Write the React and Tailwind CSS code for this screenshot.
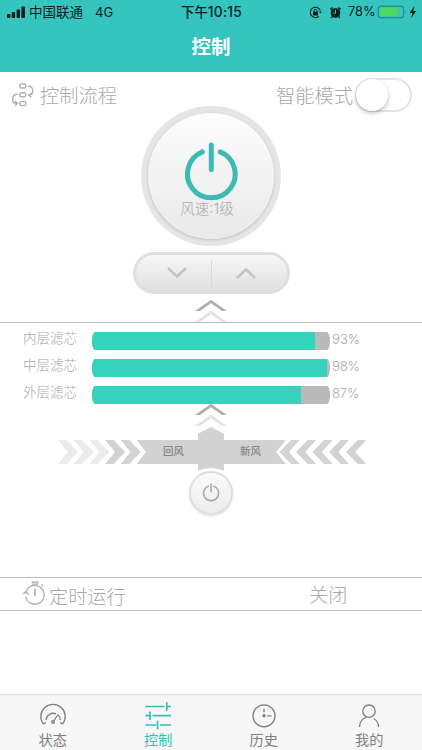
import React from "react";

const filters = [
  { name: "内层滤芯", value: 93, fill: 223 },
  { name: "中层滤芯", value: 98, fill: 235 },
  { name: "外层滤芯", value: 87, fill: 208.5 },
];

function StatusBar() {
  return (
    <div className="flex h-6 items-center pl-[7px] text-[13px] leading-6 text-[#0b1f1f]">
      <svg className="shrink-0" width="19" height="12" viewBox="0 0 19 12" fill="#0b1f1f">
        <rect x="0" y="8" width="3.4" height="4" rx="1" />
        <rect x="4.7" y="6" width="3.4" height="6" rx="1" />
        <rect x="9.6" y="3.4" width="3.4" height="8.6" rx="1" />
        <rect x="14.4" y="0.5" width="3.6" height="11.5" rx="1" />
      </svg>
      <span className="ml-[3px] w-[66px] shrink-0 text-[13.5px]">中国联通</span>
      <span className="w-[86px] shrink-0">4G</span>
      <span className="w-[128px] shrink-0 whitespace-nowrap font-medium">
        <span className="text-[13.4px]">下午</span>
        <span className="text-[13.8px] tracking-[0.25px]">10:15</span>
      </span>
      <svg className="shrink-0" width="13" height="13" viewBox="0 0 13 13" fill="none" stroke="#0b1f1f">
        <path d="M11.3 4.2A5.2 5.2 0 1 0 10 10.3" strokeWidth="1.1" />
        <path d="M9.8 5.5h3L11.3 7.5z" fill="#0b1f1f" stroke="none" />
        <rect x="4" y="5.8" width="5" height="3.7" rx=".4" fill="#0b1f1f" stroke="none" />
        <path d="M5 6V4.8a1.5 1.5 0 0 1 3 0V6" />
      </svg>
      <svg className="ml-[7px] shrink-0" width="13" height="13" viewBox="0 0 13 13" fill="none">
        <circle cx="6.5" cy="7" r="4.8" fill="#0b1f1f" />
        <path d="M1.4 3.4L3.8 1.7M11.6 3.4L9.2 1.7" stroke="#0b1f1f" strokeWidth="1.6" />
        <path d="M3.2 10.5L2.2 12M9.8 10.5l1 1.5" stroke="#0b1f1f" strokeWidth="1.3" />
        <path d="M6.5 4v3.2H4.3" stroke="#35c4be" strokeWidth="1" />
      </svg>
      <span className="ml-[6px] w-[29px] shrink-0 text-[12.8px]">78%</span>
      <svg className="shrink-0" width="42" height="14" viewBox="0 0 42 14">
        <rect x="1.2" y="1.2" width="25.4" height="11.6" rx="2.5" fill="none" stroke="#20817f" strokeWidth="1" />
        <rect x="2.8" y="2.8" width="18" height="8.4" rx="1" fill="#4cd863" />
        <path d="M28 5q1.3 2 0 4z" fill="#20817f" />
        <path d="M37.4 1L32.6 8h2.8l-1.4 5 5.3-7.1h-3z" fill="#0b1f1f" />
      </svg>
    </div>
  );
}

function Power({ width, height, stroke, color }) {
  return (
    <svg className="shrink-0" width={width} height={height} viewBox="0 0 56 60" fill="none" stroke={color} strokeWidth={stroke} strokeLinecap="round">
      <path d="M19.4 9.9A23.8 23.8 0 1 0 37.2 9.9" />
      <path d="M28.3 2.9V27.5" />
    </svg>
  );
}

function Chevrons({ className }) {
  return (
    <svg className={className} width="36" height="24" viewBox="0 0 36 24">
      <path d="M2 12L18 .8 34 12h-5L18 4.2 7 12z" fill="#b0b0b0" />
      <path d="M2 23L18 11.8 34 23h-5L18 15.2 7 23z" fill="#e2e2e2" />
    </svg>
  );
}

function Airflow() {
  return (
    <div className="relative h-[44px] w-full">
      <svg width="422" height="44" viewBox="0 427 422 44" fill="#d2d2d2">
        {[58, 73.7, 89.4, 105.1, 120.8].map((x, i) => (
          <path key={x} transform={`translate(${x} 440)`} d="M0 0h8.5L20 12 8.5 24H0L10 12z" fill={i < 3 ? "#ebebeb" : "#d2d2d2"} />
        ))}
        <path d="M136.5 440H198v-6.2L211 427l13 6.8v6.2h62l-10 12 10 12h-62v6.8Q211 465 198 470.8V464h-61.5l9.5-12z" />
        {[279.5, 296, 312.5, 329, 346].map((x) => (
          <path key={x} transform={`translate(${x} 440)`} d="M20 0h-8.3L0 12l11.7 12H20L9.3 12z" />
        ))}
      </svg>
      <div className="absolute left-[163px] top-[15px] flex gap-[56px] text-[10.5px] font-medium leading-[20px] text-[#858585]">
        <span>回风</span>
        <span>新风</span>
      </div>
    </div>
  );
}

function Tab({ label, active, children }) {
  return (
    <div className={`flex flex-1 flex-col items-center ${active ? "text-[#35bdb7]" : "text-[#808080]"}`}>
      <svg className="mt-[5px]" width="30" height="30" viewBox="0 0 30 30" fill="none" stroke="currentColor" strokeWidth="1.3">
        {children}
      </svg>
      <span className="text-[14.2px] leading-[20px]">{label}</span>
    </div>
  );
}

export default function App() {
  return (
    <div className="flex h-[750px] w-[422px] flex-col overflow-hidden bg-white font-['Inter','Noto_Sans_CJK_SC',sans-serif] text-[#a9a9a9]">
      <header className="h-[72px] shrink-0 bg-[#35c4be]">
        <StatusBar />
        <h1 className="h-12 text-center text-[19.5px] font-bold leading-[46px] text-white">控制</h1>
      </header>

      <section className="flex h-[251px] shrink-0 flex-col items-center border-b border-[#bdbdbd]">
        <div className="flex h-[34px] w-full items-start justify-between pl-[11px] pr-[10px] pt-[5px]">
          <div className="flex items-start font-light">
            <svg className="mt-[6px]" width="24" height="24" viewBox="0 0 24 24" fill="none" stroke="#b0b0b0" strokeWidth="1.4">
              <rect x="8.8" y="1" width="6" height="4" rx="1.5" />
              <rect x="8.8" y="9.8" width="6" height="4" rx="1.5" />
              <rect x="8.8" y="18.6" width="6" height="4" rx="1.5" />
              <path d="M17 3.2c6 0 6.5 8 1 9M20.5 10.2L17.8 12.3l2.6 1.8M6.5 11c-6 .5-7 9-.3 9.5M4 18l2.5 2.5L4 22.8" />
            </svg>
            <span className="ml-[5px] text-[19.3px] leading-[38px]">控制流程</span>
          </div>
          <div className="flex items-center font-light">
            <span className="text-[19.3px] leading-[38px]">智能模式</span>
            <span className="ml-[2px] mt-[-2px] flex h-[34px] w-[57px] items-center rounded-full border-2 border-[#e4e4e4]">
              <span className="-ml-px size-[32px] shrink-0 rounded-full bg-white shadow-[0_2px_4px_rgba(0,0,0,0.28)]" />
            </span>
          </div>
        </div>
        <div className="flex size-[140px] shrink-0 items-center justify-center rounded-full bg-[#e5e5e5]">
          <div className="flex size-[126px] flex-col items-center rounded-full bg-linear-to-b from-[#fdfdfd] to-[#e9e9e9] pt-[29px] shadow-[0_1px_3px_rgba(0,0,0,0.18)]">
            <Power width={56} height={60} stroke={5} color="#3cbbb5" />
            <span className="-mt-[4px] -translate-x-[4px] whitespace-nowrap text-[14.5px] font-light leading-[22px]">风速:1级</span>
          </div>
        </div>
        <div className="mt-[6px] flex h-[42px] w-[157px] shrink-0 items-center rounded-full border-[3px] border-[#dfdfdf] bg-linear-to-b from-[#f7f7f7] to-[#e0e0e0]">
          <div className="flex flex-1 justify-center pl-[7px]">
            <svg width="20" height="12" viewBox="0 0 20 12"><path d="M1 1l9 8.5L19 1" fill="none" stroke="#c4c4c4" strokeWidth="2.7" /></svg>
          </div>
          <div className="h-[27px] w-px bg-[#dadada]" />
          <div className="flex flex-1 justify-center pr-[7px]">
            <svg width="20" height="12" viewBox="0 0 20 12"><path d="M1 11l9-8.5L19 11" fill="none" stroke="#c4c4c4" strokeWidth="2.7" /></svg>
          </div>
        </div>
        <Chevrons className="mt-[5px] shrink-0" />
      </section>

      <section className="flex h-[254px] shrink-0 flex-col items-center pt-[2px]">
        <div className="w-full shrink-0 pl-[23px]">
          {filters.map((f) => (
            <div key={f.name} className="flex h-[27px] items-start font-light">
              <span className="w-[69px] text-[13.5px] leading-[27px]">{f.name}</span>
              <div className="mt-[7px] h-[18px] w-[238px] overflow-hidden rounded-[3px/9px] bg-[#b9b9b9]">
                <div className="h-full bg-[#35d2bd]" style={{ width: f.fill }} />
              </div>
              <span className="ml-[2px] text-[13.2px] leading-[28px] tracking-[-0.2px]">{f.value}%</span>
            </div>
          ))}
        </div>
        <Chevrons className="mt-[-3px] shrink-0" />
        <div className="w-full shrink-0"><Airflow /></div>
        <div className="flex size-[44px] shrink-0 items-center justify-center rounded-full border-2 border-[#dedede] bg-linear-to-b from-[#fbfbfb] to-[#ececec] pb-[2px] shadow-[0_1px_2px_rgba(0,0,0,0.15)]">
          <Power width={18} height={19} stroke={5} color="#a8a8a8" />
        </div>
      </section>

      <section className="flex h-[34px] shrink-0 items-start border-y border-[#bdbdbd] pl-[22px] font-light">
        <svg className="mt-[3px]" width="25" height="25" viewBox="0 0 25 25" fill="none" stroke="#b0b0b0" strokeWidth="1.3">
          <path d="M3.5 15.5A9.4 9.4 0 1 0 5 8.5L3.7 12.5M1 13l2.7-2.3 3 2.5M10 4h6M19.5 5l1.5-1.5" />
          <path d="M9.7 1.5h6.8" strokeWidth="2" />
          <path d="M13 8v7" strokeWidth="1.8" />
        </svg>
        <span className="ml-[2px] w-[260px] text-[19.2px] leading-[38px]">定时运行</span>
        <span className="text-[19.2px] leading-[34px]">关闭</span>
      </section>

      <nav className="mt-auto flex h-[56px] shrink-0 border-t border-[#d9d9d9] bg-[#f7f7f7]">
        <Tab label="状态">
          <path d="M5.2 23.8A12.2 12.2 0 1 1 24.8 23.8M5.2 23.8l2.6-1.2M24.8 23.8l-2.6-1.2" />
          <path d="M8 20a7.4 7.4 0 0 1 10-6.2M20.4 15.2a7.4 7.4 0 0 1 1.8 4.8M15.3 21.5L20 14.5" />
          <circle cx="15" cy="22" r="1.3" />
        </Tab>
        <Tab label="控制" active>
          <path d="M2.5 6.5h19M24 6.5h4M23.8 2.2v8.5M2.5 15.7h4M7 11.5v8.5M9.5 15.7H28M2.5 25H13M14.5 20.8v8.5M17 25h11" strokeWidth="1.7" />
        </Tab>
        <Tab label="历史">
          <circle cx="15" cy="15.8" r="11" />
          <path d="M15 8.8v3.5M18.3 15.8h4" />
          <circle cx="15" cy="15.8" r="1.7" fill="currentColor" stroke="none" />
        </Tab>
        <Tab label="我的">
          <circle cx="15" cy="11.2" r="6.2" />
          <path d="M5.5 27c.3-5.4 3-8.5 6.8-9.6M19.5 18.5c3.2 1.5 5 4.3 5.2 8.5" />
        </Tab>
      </nav>
    </div>
  );
}
